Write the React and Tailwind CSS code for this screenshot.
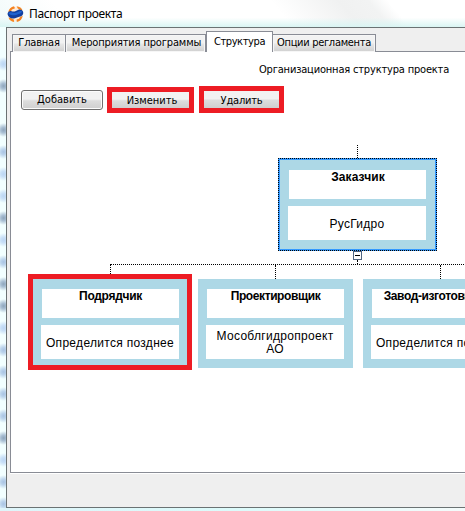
import React from 'react';

const tabs = [
  { id: 'main', label: 'Главная', box: 'w-[54px]', text: 'tracking-[-0.2px]' },
  { id: 'events', label: 'Мероприятия программы', box: 'w-[140px]', text: 'tracking-[-0.15px] pl-[2px]' },
  { id: 'structure', label: 'Структура', box: 'w-[67px]', text: 'tracking-[-0.4px] pt-px', active: true },
  { id: 'options', label: 'Опции регламента', box: 'w-[103px]', text: 'tracking-[-0.3px]' },
];

const buttons = [
  { id: 'add', label: 'Добавить', box: 'w-[82px] h-5 mt-[4px] mr-1 pt-px' },
  { id: 'edit', label: 'Изменить', box: 'w-[87px] h-[26px] mt-[1px] mr-[5px] pl-[3px] pt-0.5', marked: true },
  { id: 'delete', label: 'Удалить', box: 'w-[85px] h-[27px] pt-[3px] tracking-[-0.2px]', marked: true },
];

const nodes = [
  { id: 'customer', role: 'Заказчик', name: 'РусГидро', place: 'left-[267px] top-[106px] w-[159px] h-[93px] pl-[10px] pr-[11px] pt-3', roleText: 'tracking-[0.1px] pl-px', selected: true },
  { id: 'contractor', role: 'Подрядчик', name: 'Определится позднее', place: 'left-[17px] top-[222px] w-[164px] h-[96px] pl-[8px] pr-2 pt-[10px]', roleText: 'tracking-[-0.3px]', marked: true },
  { id: 'designer', role: 'Проектировщик', name: 'Мособлгидропроект АО', place: 'left-[187px] top-[227px] w-[155px] h-[89px] pl-2 pr-[9px] pt-[10px]', roleText: 'tracking-[-0.4px]' },
  { id: 'factory', role: 'Завод-изготовитель', name: 'Определится позднее', place: 'left-[352px] top-[227px] w-[155px] h-[89px] pl-2 pr-[9px] pt-[10px]', roleText: 'tracking-[-0.4px]' },
];

// lines of text from the window behind, seen through the glass frame
const smudges = ['soft', 'dark', 'none', 'dark', 'mid', 'soft', 'soft', 'dark', 'soft', 'mid', 'dark', 'dark', 'soft', 'mid', 'mid', 'mid', 'mid', 'dark', 'soft', 'mid', 'mid'];

const smudgeColors = {
  none: '',
  soft: 'bg-[radial-gradient(ellipse_7px_7px_at_60%_50%,#bcd6f3,#c9e0f7_40%,transparent)]',
  mid: 'bg-[radial-gradient(ellipse_7px_7px_at_60%_50%,#a9c3e2,#bcd4ec_40%,transparent)]',
  dark: 'bg-[radial-gradient(ellipse_7px_7px_at_60%_50%,#8ea5bb,#a9bfd3_40%,transparent)]',
};

function AppIcon() {
  return (
    <svg width="17" height="18" viewBox="0 0 17 18" className="shrink-0">
      <circle cx="8.500" cy="9" r="7.300" fill="#fdebd9" />
      <path d="M1.300 7C1.800 4 4 1.600 7 1.200L8 3.200L5 4.500L3.800 6.500Z" fill="#f58220" />
      <path d="M9.500 1.200C12.500 1.300 15 3.200 15.600 5.500L12.500 4.600L10.800 3.600Z" fill="#f7861f" />
      <path d="M1.500 12.500L4.500 13.200L6.800 14.500L7.200 16.900C4.300 16.700 2.200 15 1.500 12.500Z" fill="#f7861f" />
      <path d="M15.700 11C15.200 14 13 16.400 9.800 16.900L9.600 14.600L12 13.800L13.200 11.800Z" fill="#f58220" />
      <path d="M0.500 9C0.800 7 2.500 5.700 4.500 6.200C7 6.900 9 6.300 11 5C13 3.900 15 4.700 16 6.500C16.800 8.500 15.800 10.600 14 11.200C11.500 11.600 10 12.600 8 13.300C5 14.300 1.200 12.800 0.500 9Z" fill="#123f9f" />
      <path d="M1.500 8.200C3 6.300 5.500 8.300 8 8C10.500 7.600 12.500 5 15 6.300C14.500 8.500 11.500 9.200 9 10C6 10.800 3 10 1.500 8.200Z" fill="#1f62cf" />
    </svg>
  );
}

function Tab({ tab }) {
  const look = tab.active
    ? 'h-[21px] bg-white border-x border-t'
    : 'h-[18px] border-t border-r first:border-l shadow-[inset_0_0_0_1px_#f6f6f6] bg-linear-to-b from-[#f2f2f2] from-45% via-[#e6e6e6] via-55% to-[#cfcfcf]';
  return (
    <div className={`${tab.box} ${look} flex items-center justify-center border-[#898c95] shrink-0`}>
      <span className={`${tab.text} whitespace-nowrap`}>{tab.label}</span>
    </div>
  );
}

function Button({ button }) {
  const look = button.marked
    ? 'border-5 border-[#ed1c24]'
    : 'border border-[#707070] rounded-[3px] shadow-[inset_0_0_0_1px_#fcfcfc]';
  return (
    <button className={`${button.box} ${look} flex items-center justify-center bg-linear-to-b from-[#f2f2f2] from-45% via-[#dddddd] via-55% to-[#cfcfcf]`}>
      {button.label}
    </button>
  );
}

function Node({ node }) {
  return (
    <div className={`absolute ${node.place} bg-[#add8e6] ${node.marked ? 'border-5 border-[#ed1c24]' : ''}`}>
      {node.selected && (
        <div className="absolute inset-0 border border-[#3399ff] outline-1 outline-dotted -outline-offset-1 outline-black">
          <div className="absolute inset-0 border border-[#3399ff]" />
        </div>
      )}
      <div className={`${node.roleText} relative ml-px h-[29px] bg-white text-center font-bold text-[12px] leading-[15px] whitespace-nowrap`}>{node.role}</div>
      <div className="relative mt-[7px] h-[34px] bg-white flex items-center justify-center text-center text-[12px] leading-[13px] tracking-[0.3px] pt-0.5 px-1">{node.name}</div>
    </div>
  );
}

function Chart() {
  return (
    <>
      <div className="absolute left-[346px] top-[93px] h-[13px] border-l border-dotted border-black" />
      <div className="absolute left-[346px] top-[208px] h-1 border-l border-dotted border-black" />
      <div className="absolute left-[99px] top-[212px] w-[360px] border-t border-dotted border-black" />
      <div className="absolute left-[99px] top-[213px] h-[9px] border-l border-dotted border-black" />
      <div className="absolute left-[264px] top-[213px] h-[14px] border-l border-dotted border-black" />
      <div className="absolute left-[429px] top-[213px] h-[14px] border-l border-dotted border-black" />
      {nodes.map((node) => <Node key={node.id} node={node} />)}
      <div className="absolute left-[342px] top-[199px] w-[9px] h-[9px] border border-[#4f6480] bg-white flex items-center justify-center">
        <div className="w-[5px] h-px bg-black" />
      </div>
    </>
  );
}

export default function App() {
  return (
    <div className="w-[465px] h-[511px] overflow-hidden flex flex-col bg-[#f2ffff] font-['Liberation_Sans',sans-serif] text-[11px] text-black">
      <header className="h-[27px] shrink-0 flex items-center pl-[7px] bg-[linear-gradient(to_bottom,transparent_65%,#d9f5f3),linear-gradient(50deg,#f1fafa,#ffffff_15%,#ffffff_60%,#f0f1f1_74%,#f2f3f3_80%,#ffffff_84%)]">
        <AppIcon />
        <h1 className="ml-[5px] font-['Noto_Sans',sans-serif] text-[12px] leading-[16px] tracking-[-0.35px] whitespace-nowrap">Паспорт проекта</h1>
      </header>

      <div className="flex h-[481px] shrink-0">
        <aside className="w-1.5 shrink-0 pt-[26px] overflow-hidden">
          {smudges.map((tone, i) => <div key={i} className={`h-[22px] ${smudgeColors[tone]}`} />)}
        </aside>
        <main className="flex-1 min-w-0 border-l border-y border-[#6b7273] bg-[#efefef] pl-[3px] pt-[3px] flex flex-col">
          <nav className="flex items-end pl-0.5 h-[21px] shrink-0 relative z-10 -mb-px font-['DejaVu_Sans_Condensed','DejaVu_Sans',sans-serif] font-stretch-condensed">
            {tabs.map((tab) => <Tab key={tab.id} tab={tab} />)}
          </nav>
          <section className="relative h-[422px] shrink-0 bg-white border-l border-y border-[#898c95] shadow-[0_1px_0_#ffffff] overflow-hidden">
            <div className="font-['DejaVu_Sans_Condensed','DejaVu_Sans',sans-serif] font-stretch-condensed">
              <p className="pl-[248px] pt-[11px] leading-[14px] tracking-[-0.18px] whitespace-nowrap">Организационная структура проекта</p>
              <div className="flex items-start pl-[10px] pt-[9px]">
                {buttons.map((button) => <Button key={button.id} button={button} />)}
              </div>
            </div>
            <Chart />
          </section>
        </main>
      </div>
      <footer className="h-[3px] shrink-0 bg-linear-to-r from-[#dff5fa] via-[#dcfbfb] to-[#f4fbfb]" />
    </div>
  );
}
